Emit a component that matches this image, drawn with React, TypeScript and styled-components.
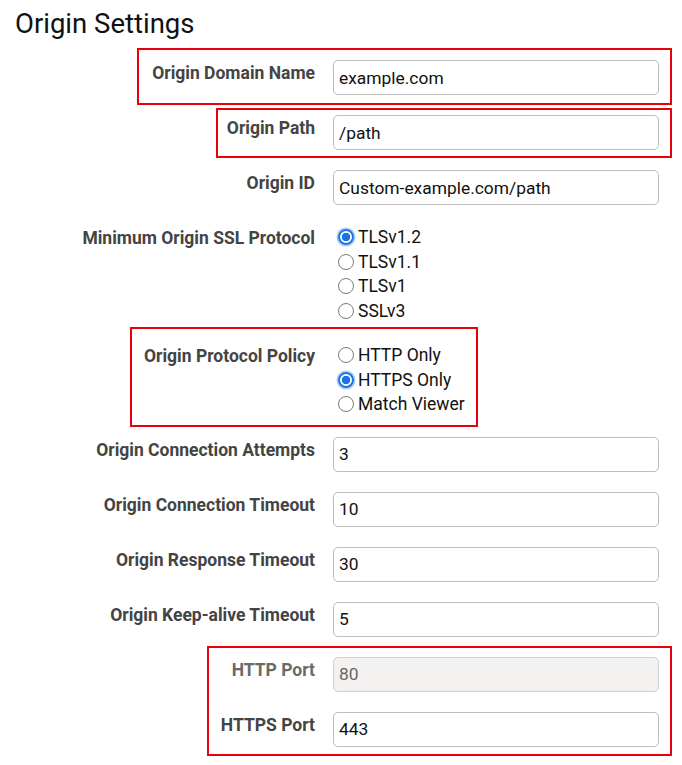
import styled, { createGlobalStyle } from 'styled-components';

const GlobalStyle = createGlobalStyle`
  html, body {
    margin: 0;
    padding: 0;
    background: #ffffff;
  }

  body {
    font-family: Roboto, 'Liberation Sans', Arial, sans-serif;
    color: #111111;
  }
`;

type Option = {
  label: string;
  checked?: boolean;
};

type Mark = {
  top: number;
  left: number;
  right: number;
  bottom: number;
};

const sslOptions: Option[] = [
  { label: 'TLSv1.2', checked: true },
  { label: 'TLSv1.1' },
  { label: 'TLSv1' },
  { label: 'SSLv3' },
];

const policyOptions: Option[] = [
  { label: 'HTTP Only' },
  { label: 'HTTPS Only', checked: true },
  { label: 'Match Viewer' },
];

// red annotation rectangles drawn over the form
const marks: Mark[] = [
  { top: 48, left: 137, right: 672, bottom: 105 },
  { top: 108, left: 216, right: 672, bottom: 158 },
  { top: 327, left: 130, right: 478, bottom: 427 },
  { top: 646, left: 207, right: 672, bottom: 756 },
];

const Page = styled.div`
  position: relative;
  width: 682px;
  min-height: 765px;
  padding-top: 9px;
  box-sizing: border-box;
`;

const Title = styled.h1`
  margin: 0 0 21px;
  padding-left: 15px;
  font-size: 27.5px;
  font-weight: 400;
  line-height: 30px;
  color: #111111;
`;

const Form = styled.div`
  display: flex;
  flex-direction: column;
  gap: 20px;
`;

const Row = styled.div`
  display: grid;
  grid-template-columns: 315px 326px;
  column-gap: 18px;
  align-items: start;
`;

const Label = styled.label<{ $disabled?: boolean }>`
  text-align: right;
  padding-top: 3px;
  font-size: 17.5px;
  font-weight: 700;
  line-height: 21px;
  color: ${(p) => (p.$disabled ? '#6a6a6a' : '#444444')};
  white-space: nowrap;
`;

const TextInput = styled.input`
  box-sizing: border-box;
  width: 326px;
  height: 35px;
  margin: 0;
  padding: 0 5px;
  border: 1px solid #bcbcbc;
  border-radius: 5px;
  background: #ffffff;
  font-family: Roboto, 'Liberation Sans', Arial, sans-serif;
  font-size: 17.4px;
  color: #111111;
  outline: none;

  &:disabled {
    background: #f3f2f0;
    border-color: #cfcfcf;
    color: #666666;
  }
`;

const RadioList = styled.div`
  display: flex;
  flex-direction: column;
`;

const RadioLine = styled.label`
  display: flex;
  align-items: center;
  gap: 4px;
  height: 24.5px;
  padding-left: 5px;
  font-size: 17.5px;
  color: #111111;
`;

const Radio = styled.input`
  appearance: none;
  box-sizing: border-box;
  width: 16px;
  height: 16px;
  margin: 0;
  border: 1px solid #7a7a7a;
  border-radius: 50%;
  background: #ffffff;

  &:checked {
    border: 2px solid #1a73e8;
    background: radial-gradient(circle, #1a73e8 0 4px, #ffffff 4.5px);
    box-shadow: 0 0 0 1.5px #a9cbf7;
  }
`;

const Highlight = styled.div`
  position: absolute;
  box-sizing: border-box;
  border: 2px solid #e8000b;
  pointer-events: none;
`;

function TextField({
  label,
  value,
  disabled,
}: {
  label: string;
  value: string;
  disabled?: boolean;
}) {
  return (
    <Row>
      <Label $disabled={disabled}>{label}</Label>
      <TextInput type="text" defaultValue={value} disabled={disabled} />
    </Row>
  );
}

function RadioField({
  label,
  name,
  options,
}: {
  label: string;
  name: string;
  options: Option[];
}) {
  return (
    <Row>
      <Label>{label}</Label>
      <RadioList>
        {options.map((opt) => (
          <RadioLine key={opt.label}>
            <Radio type="radio" name={name} defaultChecked={opt.checked} />
            {opt.label}
          </RadioLine>
        ))}
      </RadioList>
    </Row>
  );
}

export default function App() {
  return (
    <>
      <GlobalStyle />
      <Page>
        <Title>Origin Settings</Title>
        <Form>
          <TextField label="Origin Domain Name" value="example.com" />
          <TextField label="Origin Path" value="/path" />
          <TextField label="Origin ID" value="Custom-example.com/path" />
          <RadioField
            label="Minimum Origin SSL Protocol"
            name="ssl"
            options={sslOptions}
          />
          <RadioField
            label="Origin Protocol Policy"
            name="policy"
            options={policyOptions}
          />
          <TextField label="Origin Connection Attempts" value="3" />
          <TextField label="Origin Connection Timeout" value="10" />
          <TextField label="Origin Response Timeout" value="30" />
          <TextField label="Origin Keep-alive Timeout" value="5" />
          <TextField label="HTTP Port" value="80" disabled />
          <TextField label="HTTPS Port" value="443" />
        </Form>
        {marks.map((m) => (
          <Highlight
            key={`${m.top}-${m.left}`}
            style={{
              top: m.top,
              left: m.left,
              width: m.right - m.left,
              height: m.bottom - m.top,
            }}
          />
        ))}
      </Page>
    </>
  );
}
